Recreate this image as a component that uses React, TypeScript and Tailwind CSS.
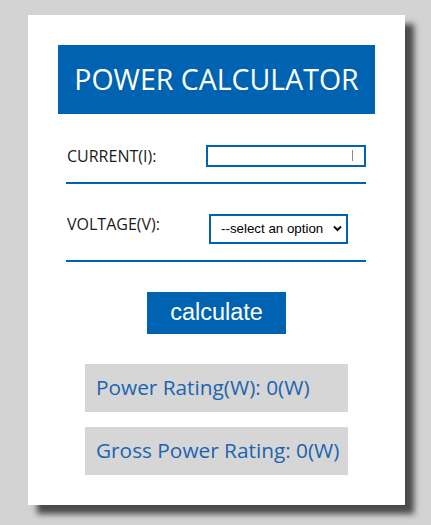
import { useState } from 'react';

const App = () => {
  const [current, setCurrent] = useState('');
  const [voltage, setVoltage] = useState('');

  return (
    <div className="min-h-screen bg-[#d3d3d3] pt-[15px] pl-[28px] font-['Open_Sans',sans-serif]">
      <div className="flex h-[490px] w-[377px] flex-col bg-white px-[30px] pt-[30px] shadow-[9px_9px_6px_#4a4a4a]">
        {/* Title */}
        <h1 className="flex h-[69px] items-center justify-center bg-[#0063b1] text-[28.5px] font-normal text-white">
          POWER CALCULATOR
        </h1>

        {/* Inputs */}
        <div className="ml-[8px] w-[300px]">
          <div className="mt-[31px] flex items-start">
            <label htmlFor="current" className="-mt-[1px] w-[140px] pl-[1px] text-[16px] leading-6 text-[#1b1b1b]">
              CURRENT(I):
            </label>
            <div className="relative">
              <input
                id="current"
                type="text"
                value={current}
                onChange={(e) => setCurrent(e.target.value)}
                className="block h-[22px] w-[160px] border-2 border-[#0063b1] bg-white outline-none"
              />
              <span className="absolute top-[5px] left-[146px] h-[11px] w-[1px] bg-[#8a8a8a]" />
            </div>
          </div>
          <div className="mt-[14px] h-[2px] bg-[#0063b1]" />

          <div className="mt-[30px] flex items-start">
            <label htmlFor="voltage" className="-mt-[2px] w-[143px] pl-[1px] text-[16px] leading-6 text-[#1b1b1b]">
              VOLTAGE(V):
            </label>
            <div className="relative">
              <select
                id="voltage"
                value={voltage}
                onChange={(e) => setVoltage(e.target.value)}
                className="block h-[30px] w-[139px] appearance-none border-2 border-[#0063b1] bg-white pl-[10px] font-['Liberation_Sans',Arial,sans-serif] text-[13.33px] text-black outline-none"
              >
                <option value="">--select an option</option>
                <option value="120">120V</option>
                <option value="230">230V</option>
              </select>
              <svg
                className="pointer-events-none absolute top-[11px] right-[6px]"
                width="9"
                height="7"
                viewBox="0 0 9 7"
              >
                <path d="M1 1.5 L4.5 5 L8 1.5" fill="none" stroke="#111" strokeWidth="2" />
              </svg>
            </div>
          </div>
          <div className="mt-[16px] h-[2px] bg-[#0063b1]" />
        </div>

        {/* Button */}
        <button className="mx-auto mt-[30px] h-[42px] w-[139px] bg-[#0063b1] font-['Liberation_Sans',Arial,sans-serif] text-[23.5px] text-white">
          calculate
        </button>

        {/* Results */}
        <div className="mx-auto mt-[30px] flex h-[48px] w-[263px] items-center bg-[#d6d6d6] pl-[11px] text-[20.8px] text-[#1c64b0]">
          Power Rating(W): 0(W)
        </div>
        <div className="mx-auto mt-[15px] flex h-[48px] w-[263px] items-center bg-[#d6d6d6] pl-[11px] text-[20.8px] text-[#1c64b0]">
          Gross Power Rating: 0(W)
        </div>
      </div>
    </div>
  );
};

export default App;
